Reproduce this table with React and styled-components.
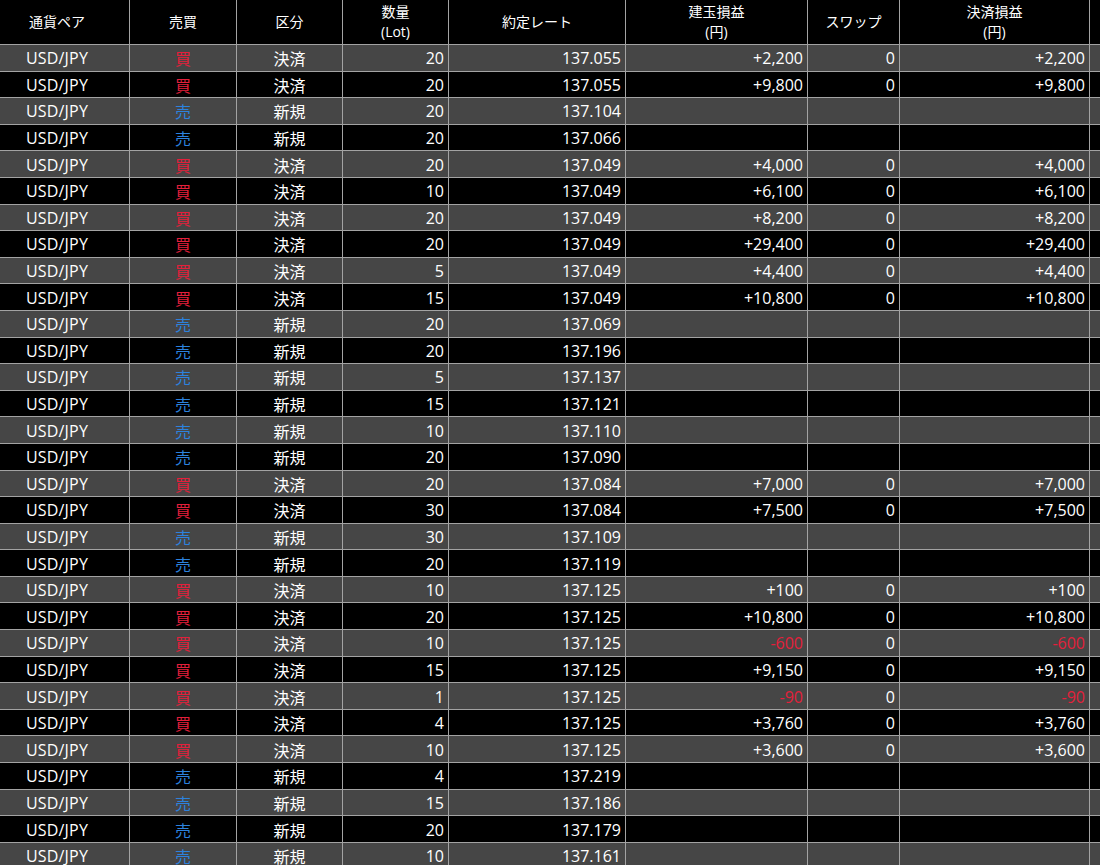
import React from "react";
import styled, { createGlobalStyle } from "styled-components";

const Global = createGlobalStyle`
  html, body { margin: 0; padding: 0; background: #000; overflow: hidden; }
  body { font-family: "Segoe UI", "Open Sans", "Noto Sans CJK JP", sans-serif; }
`;

const COLS = "130px 107px 106px 106px 177px 182px 92px 190px 1fr";
const LINE = "#a3a3a3";

const Table = styled.div`
  width: 1100px;
  color: #fff;
`;

const HeaderRow = styled.div`
  display: grid;
  grid-template-columns: ${COLS};
  height: 45px;
  background: #000;
  border-bottom: 1px solid ${LINE};
  box-sizing: border-box;
`;

const HeadCell = styled.div`
  display: flex;
  align-items: center;
  justify-content: center;
  text-align: center;
  font-size: 14px;
  line-height: 19.5px;
  border-right: ${(p) => (p.$last ? "none" : `1px solid ${LINE}`)};
  white-space: pre-line;
  padding-right: ${(p) => (p.$first ? "15px" : "0")};
  padding-bottom: 1px;
  box-sizing: border-box;
`;

const Row = styled.div`
  display: grid;
  grid-template-columns: ${COLS};
  height: 26.6px;
  box-sizing: border-box;
  border-bottom: 1px solid ${LINE};
  background: ${(p) => (p.$alt ? "#464646" : "#000")};
`;

const Cell = styled.div`
  display: flex;
  align-items: center;
  justify-content: ${(p) => (p.$right ? "flex-end" : "center")};
  padding-right: ${(p) => (p.$right ? "4px" : p.$first ? "15px" : "0")};
  padding-top: 1px;
  font-size: 16px;
  color: ${(p) => p.$color || "#fff"};
  letter-spacing: ${(p) => (p.$first ? "0.2px" : "0")};
  border-right: ${(p) => (p.$last ? "none" : `1px solid ${LINE}`)};
  box-sizing: border-box;
  white-space: nowrap;
  overflow: hidden;
`;

const RED = "#e41f3b";
const BLUE = "#2c82de";

const raw = [
  ["買", 20, "137.055", "+2,200"],
  ["買", 20, "137.055", "+9,800"],
  ["売", 20, "137.104"],
  ["売", 20, "137.066"],
  ["買", 20, "137.049", "+4,000"],
  ["買", 10, "137.049", "+6,100"],
  ["買", 20, "137.049", "+8,200"],
  ["買", 20, "137.049", "+29,400"],
  ["買", 5, "137.049", "+4,400"],
  ["買", 15, "137.049", "+10,800"],
  ["売", 20, "137.069"],
  ["売", 20, "137.196"],
  ["売", 5, "137.137"],
  ["売", 15, "137.121"],
  ["売", 10, "137.110"],
  ["売", 20, "137.090"],
  ["買", 20, "137.084", "+7,000"],
  ["買", 30, "137.084", "+7,500"],
  ["売", 30, "137.109"],
  ["売", 20, "137.119"],
  ["買", 10, "137.125", "+100"],
  ["買", 20, "137.125", "+10,800"],
  ["買", 10, "137.125", "-600"],
  ["買", 15, "137.125", "+9,150"],
  ["買", 1, "137.125", "-90"],
  ["買", 4, "137.125", "+3,760"],
  ["買", 10, "137.125", "+3,600"],
  ["売", 4, "137.219"],
  ["売", 15, "137.186"],
  ["売", 20, "137.179"],
  ["売", 10, "137.161"],
];

const headers = [
  "通貨ペア",
  "売買",
  "区分",
  "数量\n(Lot)",
  "約定レート",
  "建玉損益\n(円)",
  "スワップ",
  "決済損益\n(円)",
  "",
];

export default function App() {
  return (
    <>
      <Global />
      <Table>
        <HeaderRow>
          {headers.map((h, i) => (
            <HeadCell key={i} $first={i === 0} $last={i === headers.length - 1}>
              {h}
            </HeadCell>
          ))}
        </HeaderRow>
        {raw.map(([side, lot, rate, pl], i) => {
          const buy = side === "買";
          const neg = pl && pl.startsWith("-");
          const plColor = neg ? RED : "#fff";
          return (
            <Row key={i} $alt={i % 2 === 0}>
              <Cell $first>USD/JPY</Cell>
              <Cell $color={buy ? RED : BLUE}>{side}</Cell>
              <Cell>{buy ? "決済" : "新規"}</Cell>
              <Cell $right>{lot}</Cell>
              <Cell $right>{rate}</Cell>
              <Cell $right $color={plColor}>{pl || ""}</Cell>
              <Cell $right>{pl ? "0" : ""}</Cell>
              <Cell $right $color={plColor}>{pl || ""}</Cell>
              <Cell $last />
            </Row>
          );
        })}
      </Table>
    </>
  );
}
